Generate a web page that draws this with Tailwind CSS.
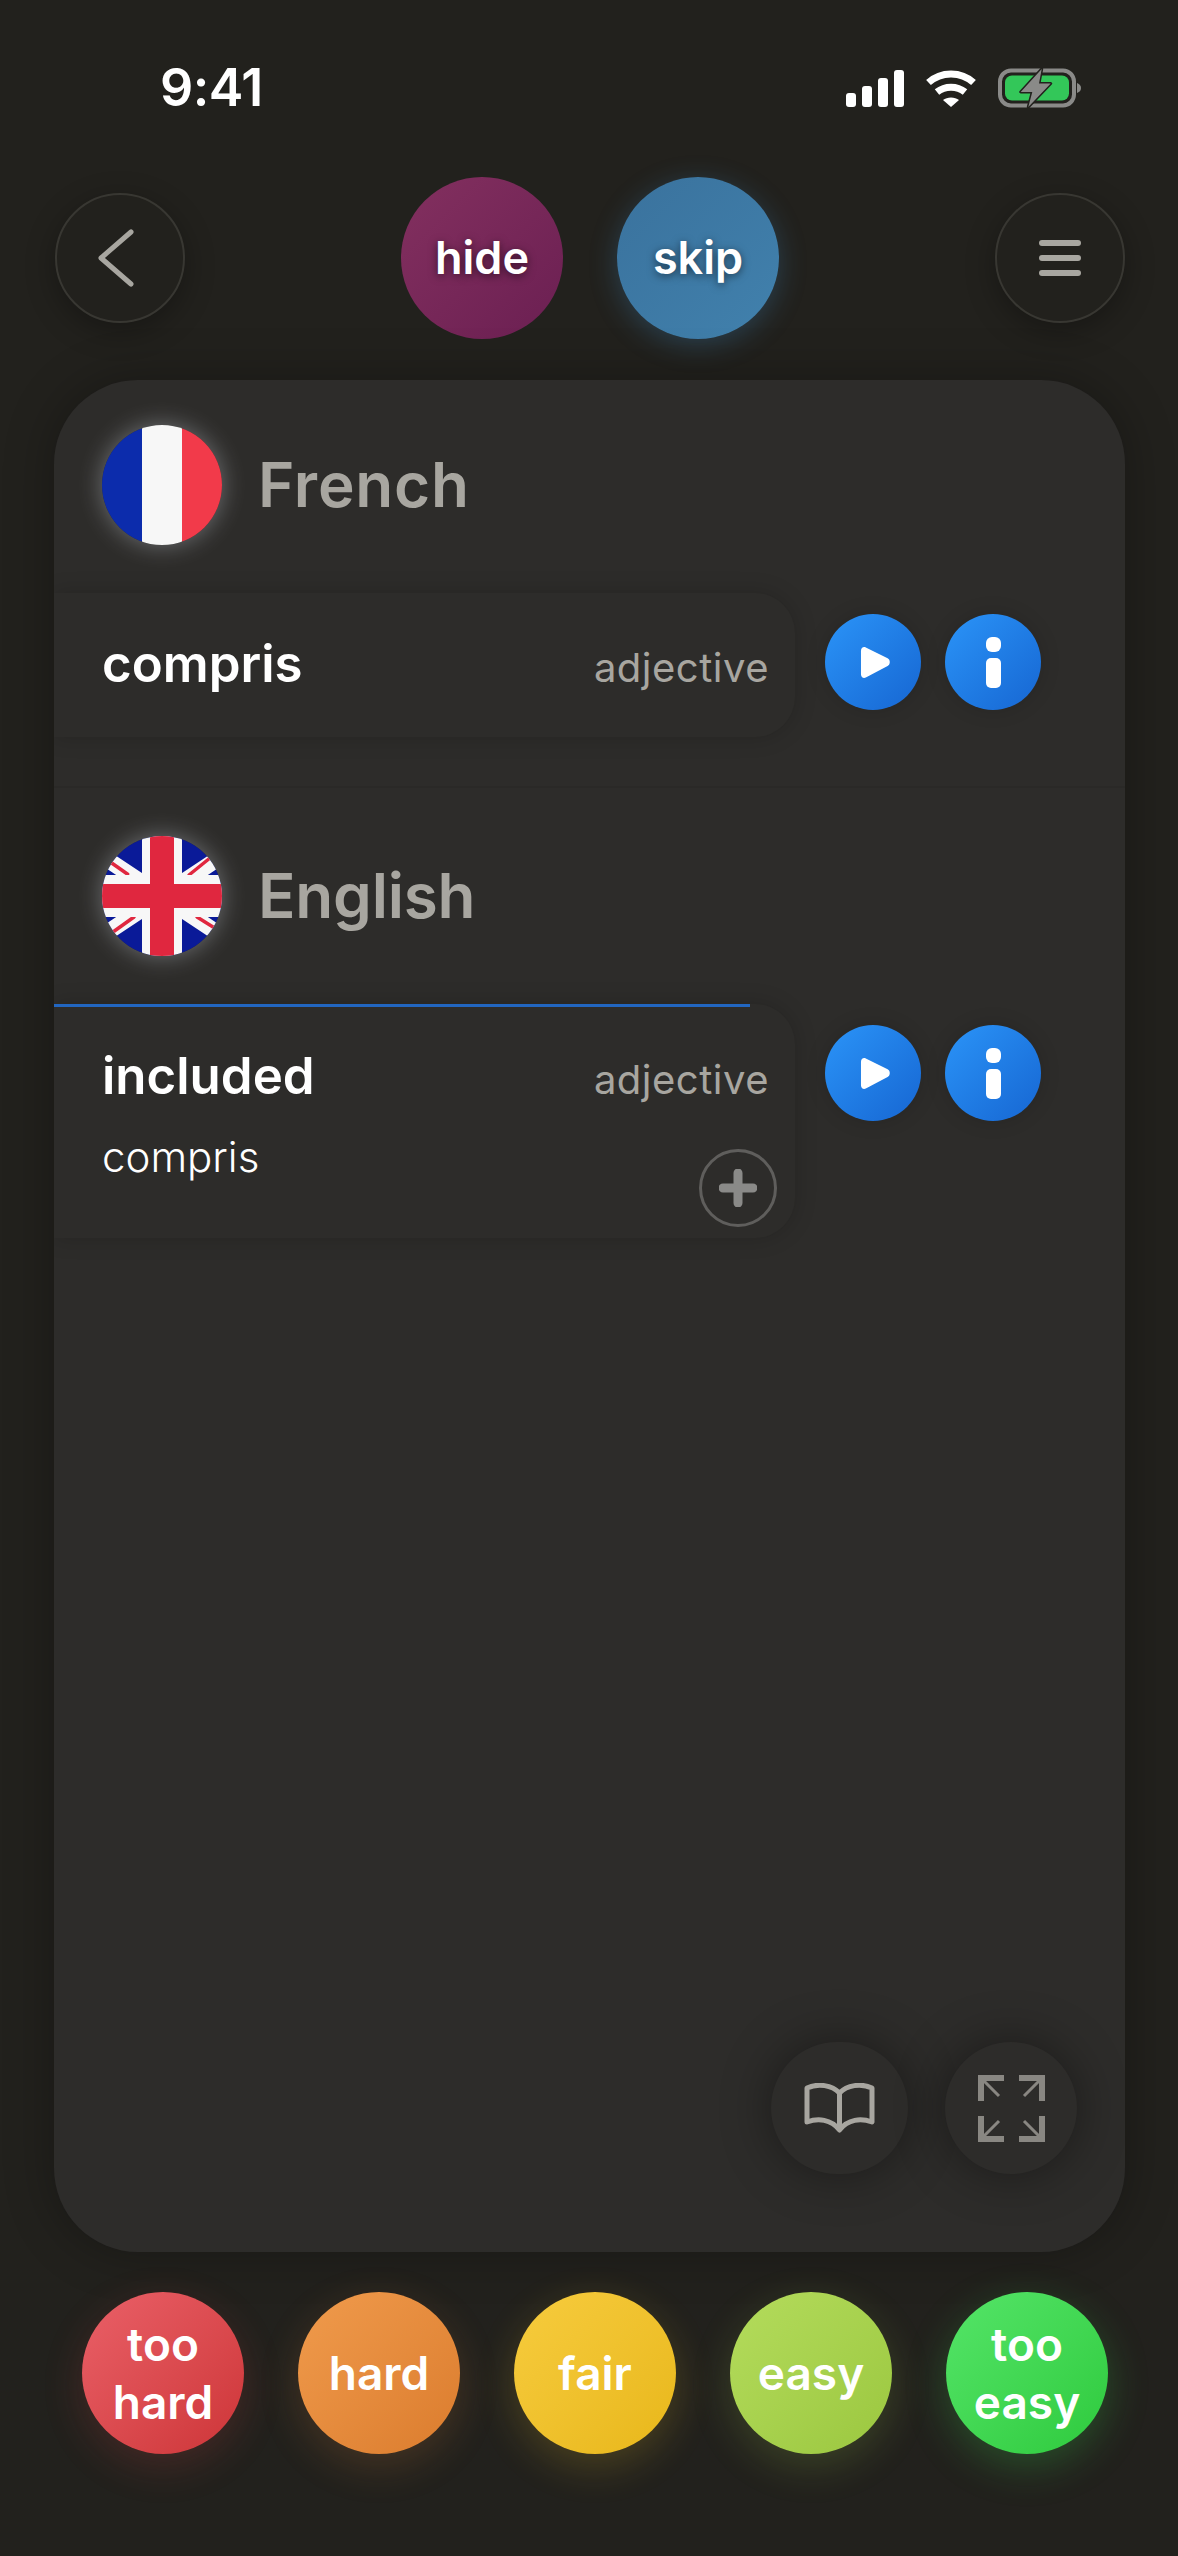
<!DOCTYPE html>
<html lang="en">
<head>
    <meta charset="UTF-8">
    <meta name="viewport" content="width=device-width, initial-scale=1.0">
    <title>Flashcard review</title>
    <script src="https://cdn.jsdelivr.net/npm/@tailwindcss/browser@4"></script>
</head>
<body class="bg-[#22211d] font-['Inter',sans-serif] text-white">
    <div class="w-[1178px] h-[2556px] overflow-hidden flex flex-col">

        <!-- status bar -->
        <div class="h-[177px] pl-[160px] pr-[97px] pt-[58px] flex justify-between items-start">
            <span class="text-[52px] leading-[60px] font-semibold tracking-[-0.5px]">9:41</span>
            <div class="flex items-center gap-[22px] mt-[10px]">
                <div class="flex items-end gap-[6px] h-[37px]">
                    <div class="w-[10px] h-[14px] rounded-[3px] bg-white"></div>
                    <div class="w-[10px] h-[21px] rounded-[3px] bg-white"></div>
                    <div class="w-[10px] h-[29px] rounded-[3px] bg-white"></div>
                    <div class="w-[10px] h-[37px] rounded-[3px] bg-white"></div>
                </div>
                <svg width="50" height="37" viewBox="0 0 50 37" fill="none">
                    <path d="M2.5 12.5C15 1 35 1 47.5 12.5" stroke="#fff" stroke-width="7" stroke-linejoin="round"/>
                    <path d="M11 22C19 15.5 31 15.5 39 22" stroke="#fff" stroke-width="7"/>
                    <path d="M17 30C21 26.5 29 26.5 33 30L25 37Z" fill="#fff"/>
                </svg>
                <svg width="83" height="40" viewBox="0 0 83 40" fill="none">
                    <rect x="2" y="2.5" width="74" height="35" rx="11" stroke="#8a8a88" stroke-width="4"/>
                    <rect x="7" y="7.5" width="64" height="25" rx="7" fill="#33c759"/>
                    <path d="M79 15C82 16 83 18 83 20C83 22 82 24 79 25Z" fill="#8a8a88"/>
                    <path d="M43.7 1L22.7 24H34.3L30.3 39L52.7 15.5H41Z" fill="#8a8a88" stroke="#22211d" stroke-width="3" paint-order="stroke" stroke-linejoin="round"/>
                </svg>
            </div>
        </div>

        <!-- top actions -->
        <div class="h-[162px] pl-[55px] pr-[53px] flex items-center justify-between">
            <button class="w-[130px] h-[130px] rounded-full border-2 border-[#383732] bg-[#22211d] shadow-[0_8px_30px_rgba(0,0,0,0.3)] flex items-center justify-center">
                <svg width="36" height="58" viewBox="0 0 36 58" fill="none" class="mr-[8px]">
                    <path d="M33 3L3 29L33 55" stroke="#a8a6a0" stroke-width="5" stroke-linecap="round" stroke-linejoin="round"/>
                </svg>
            </button>
            <div class="flex gap-[54px]">
                <button class="w-[162px] h-[162px] rounded-full bg-linear-to-br from-[#83305f] to-[#6b1f52] text-[45px] font-semibold [text-shadow:0_2px_8px_rgba(0,0,0,0.55)]">hide</button>
                <button class="w-[162px] h-[162px] rounded-full bg-linear-to-br from-[#3a729d] to-[#4181ad] text-[45px] font-semibold shadow-[0_6px_28px_rgba(64,140,200,0.3)] [text-shadow:0_2px_8px_rgba(0,0,0,0.55)]">skip</button>
            </div>
            <button class="w-[130px] h-[130px] rounded-full border-2 border-[#383732] bg-[#22211d] shadow-[0_8px_30px_rgba(0,0,0,0.3)] flex flex-col items-center justify-center gap-[9px]">
                <span class="w-[42px] h-[6px] rounded-full bg-[#a8a6a0]"></span>
                <span class="w-[42px] h-[6px] rounded-full bg-[#a8a6a0]"></span>
                <span class="w-[42px] h-[6px] rounded-full bg-[#a8a6a0]"></span>
            </button>
        </div>

        <!-- card -->
        <div class="mt-[41px] ml-[54px] w-[1071px] h-[1872px] rounded-[84px] bg-[#2d2c2a] shadow-[0_0_50px_rgba(0,0,0,0.3)] overflow-hidden flex flex-col">

            <!-- French -->
            <div class="h-[408px] pt-[45px] border-b-2 border-[#2a2927]">
                <div class="flex items-center pl-[48px] gap-[38px] h-[120px]">
                    <svg width="120" height="120" viewBox="0 0 120 120" class="rounded-full shadow-[0_0_24px_rgba(215,220,230,0.4)]">
                        <rect width="40" height="120" fill="#0c2cac"/>
                        <rect x="40" width="40" height="120" fill="#f7f7f7"/>
                        <rect x="80" width="40" height="120" fill="#f23a4a"/>
                    </svg>
                    <span class="text-[62px] leading-none font-semibold text-[#a8a6a0] tracking-[0.8px] ml-[-2px]">French</span>
                </div>
                <div class="flex items-start mt-[48px]">
                    <div class="w-[741px] h-[144px] rounded-r-[40px] bg-[#2d2c2a] shadow-[0_0_22px_rgba(0,0,0,0.18)] pl-[48px] pr-[26px] pt-[42px] flex justify-between items-baseline">
                        <span class="text-[51px] leading-[58px] font-semibold">compris</span>
                        <span class="text-[40px] text-[#a8a6a0] tracking-[0.5px]">adjective</span>
                    </div>
                    <div class="flex gap-[24px] ml-[30px] mt-[21px]">
                        <button class="w-[96px] h-[96px] rounded-full bg-linear-to-br from-[#2b94f8] to-[#1766d2] flex items-center justify-center shadow-[0_0_20px_rgba(0,0,0,0.15)]">
                            <svg width="31" height="33" viewBox="0 0 32 34" class="ml-[4px]"><path d="M6 1.5L28.5 12.5C31.5 14 31.5 19 28.5 20.5L6 32.5C3.5 33.8 1 32 1 29V5C1 2 3.500 0.300 6 1.500Z" fill="#fff"/></svg>
                        </button>
                        <button class="w-[96px] h-[96px] rounded-full bg-linear-to-br from-[#2b94f8] to-[#1766d2] flex flex-col items-center justify-center gap-[6px] shadow-[0_0_20px_rgba(0,0,0,0.15)]">
                            <span class="w-[15px] h-[15px] rounded-[6px] bg-white"></span>
                            <span class="w-[15px] h-[30px] rounded-[5px] bg-white"></span>
                        </button>
                    </div>
                </div>
            </div>

            <!-- English -->
            <div class="pt-[48px]">
                <div class="flex items-center pl-[48px] gap-[38px] h-[120px]">
                    <svg width="120" height="120" viewBox="0 0 120 120" class="rounded-full shadow-[0_0_24px_rgba(215,220,230,0.4)]">
                        <rect width="120" height="120" fill="#0a1a98"/>
                        <g stroke="#f7f7f7" stroke-width="16">
                            <path d="M60 60L150 0M60 60L-30 0M60 60L-30 120M60 60L150 120"/>
                        </g>
                        <g stroke="#e0273f" stroke-width="3.500" stroke-linecap="round">
                            <path d="M87 39L108 22M25.700 38.300L9.700 27M32 81L11 96M95 81L111 91"/>
                        </g>
                        <rect x="40" width="40" height="120" fill="#f7f7f7"/>
                        <rect y="39" width="120" height="42" fill="#f7f7f7"/>
                        <rect x="48" width="24" height="120" fill="#e0273f"/>
                        <rect y="48" width="120" height="24" fill="#e0273f"/>
                    </svg>
                    <span class="text-[62px] leading-none font-semibold text-[#a8a6a0] tracking-[-0.2px] ml-[-2px]">English</span>
                </div>
                <div class="flex items-start mt-[48px]">
                    <div class="relative w-[741px] h-[234px] rounded-r-[40px] bg-[#2d2c2a] shadow-[0_0_22px_rgba(0,0,0,0.18)] pl-[48px] pr-[26px] pt-[43px]">
                        <div class="absolute left-0 top-0 w-[696px] h-[3px] bg-[#2266c0]"></div>
                        <div class="flex justify-between items-baseline">
                            <span class="text-[51px] leading-[58px] font-semibold">included</span>
                            <span class="text-[40px] text-[#a8a6a0] tracking-[0.5px]">adjective</span>
                        </div>
                        <div class="text-[42px] leading-[48px] font-light mt-[23px]">compris</div>
                        <button class="absolute left-[645px] top-[145px] w-[78px] h-[78px] rounded-full border-[3px] border-[#5f5e5c] flex items-center justify-center">
                            <svg width="38" height="38" viewBox="0 0 38 38"><path d="M19 4V34M4 19H34" stroke="#8a8a88" stroke-width="9" stroke-linecap="round"/></svg>
                        </button>
                    </div>
                    <div class="flex gap-[24px] ml-[30px] mt-[21px]">
                        <button class="w-[96px] h-[96px] rounded-full bg-linear-to-br from-[#2b94f8] to-[#1766d2] flex items-center justify-center shadow-[0_0_20px_rgba(0,0,0,0.15)]">
                            <svg width="31" height="33" viewBox="0 0 32 34" class="ml-[4px]"><path d="M6 1.5L28.5 12.5C31.5 14 31.5 19 28.5 20.5L6 32.5C3.5 33.8 1 32 1 29V5C1 2 3.500 0.300 6 1.500Z" fill="#fff"/></svg>
                        </button>
                        <button class="w-[96px] h-[96px] rounded-full bg-linear-to-br from-[#2b94f8] to-[#1766d2] flex flex-col items-center justify-center gap-[6px] shadow-[0_0_20px_rgba(0,0,0,0.15)]">
                            <span class="w-[15px] h-[15px] rounded-[6px] bg-white"></span>
                            <span class="w-[15px] h-[30px] rounded-[5px] bg-white"></span>
                        </button>
                    </div>
                </div>
            </div>

            <!-- card tools -->
            <div class="mt-auto mb-[78px] pr-[48px] flex justify-end items-center gap-[37px]">
                <button class="w-[137px] h-[132px] rounded-full bg-[#2d2c2a] shadow-[0_0_50px_rgba(0,0,0,0.4)] flex items-center justify-center">
                    <svg width="71" height="50" viewBox="0 0 71 50" fill="none">
                        <path d="M35.500 10C28 2 14 0 3 5V39C14 35 27 36 35.500 47C44 36 57 35 68 39V5C57 0 43 2 35.500 10V45" stroke="#a8a6a0" stroke-width="5" stroke-linecap="round" stroke-linejoin="round"/>
                    </svg>
                </button>
                <button class="w-[132px] h-[132px] rounded-full bg-[#2d2c2a] shadow-[0_0_50px_rgba(0,0,0,0.4)] flex items-center justify-center">
                    <svg width="67" height="67" viewBox="0 0 67 67" fill="none" stroke="#9a9892" opacity="0.85">
                        <path d="M3 26V3H26M41 3H64V26M64 41V64H41M26 64H3V41" stroke-width="6"/>
                        <path d="M6 6L21 21M61 6L46 21M6 61L21 46M61 61L46 46" stroke-width="3"/>
                    </svg>
                </button>
            </div>
        </div>

        <!-- difficulty buttons -->
        <div class="mt-[40px] pl-[82px] flex gap-[54px] text-[46px] leading-[58px] font-semibold [text-shadow:0_2px_8px_rgba(0,0,0,0.5)]">
            <button class="w-[162px] h-[162px] rounded-full bg-linear-to-br from-[#ea6068] to-[#cd3437] shadow-[0_12px_40px_rgba(225,70,70,0.18)]">too<br>hard</button>
            <button class="w-[162px] h-[162px] rounded-full bg-linear-to-br from-[#f09b4c] to-[#db7c2d] shadow-[0_12px_40px_rgba(235,140,60,0.18)]">hard</button>
            <button class="w-[162px] h-[162px] rounded-full bg-linear-to-br from-[#f7cc3d] to-[#e8b718] shadow-[0_12px_40px_rgba(240,195,40,0.2)]">fair</button>
            <button class="w-[162px] h-[162px] rounded-full bg-linear-to-br from-[#b4dc5c] to-[#9bc73f] shadow-[0_12px_40px_rgba(170,215,80,0.18)]">easy</button>
            <button class="w-[162px] h-[162px] rounded-full bg-linear-to-br from-[#54e568] to-[#2dca3c] shadow-[0_12px_40px_rgba(60,215,80,0.25)]">too<br>easy</button>
        </div>
    </div>
</body>
</html>
